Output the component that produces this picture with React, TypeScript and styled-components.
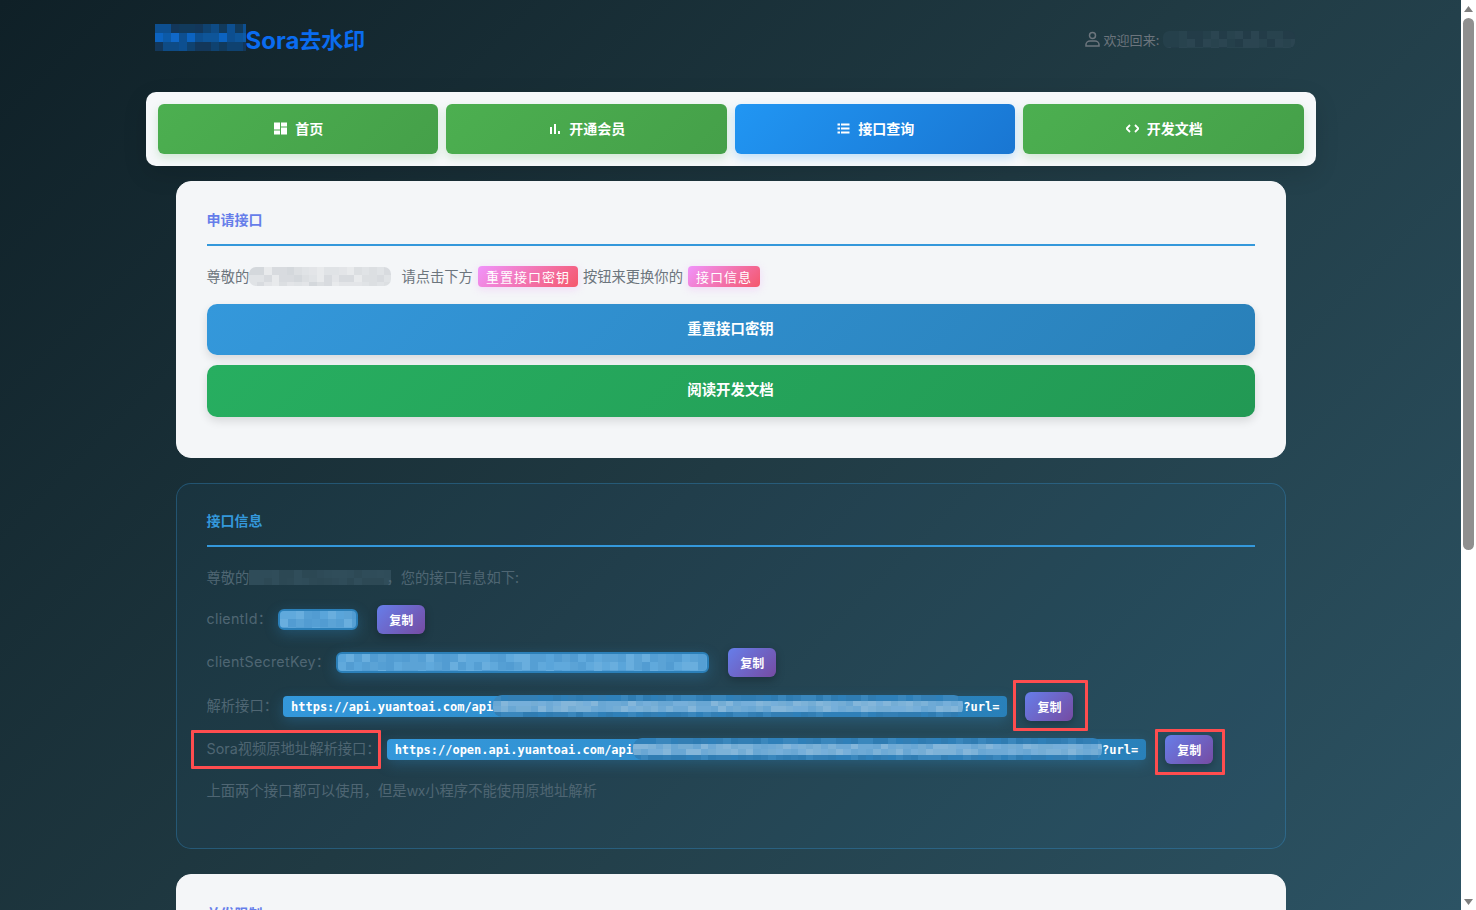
import React from 'react';
import styled, { createGlobalStyle } from 'styled-components';

const Global = createGlobalStyle`
  html, body { margin: 0; padding: 0; height: 100%; overflow: hidden; }
  body { font-family: "Inter", "Noto Sans CJK SC", sans-serif; font-size: 14.3px; }
`;

const Viewport = styled.div`display: flex; height: 910px; overflow: hidden;`;
const Page = styled.div`
  flex: 1; min-width: 0; overflow: hidden;
  background: linear-gradient(135deg, #0f2027 0%, #203a43 50%, #2c5364 100%);
`;
const Rail = styled.div`
  width: 15px; flex: none; background: #fff; display: flex; flex-direction: column; align-items: center;
`;
const RailArrow = styled.div<{ $down?: boolean }>`
  height: 17px; flex: none; display: flex; align-items: center; justify-content: center; width: 100%;
  margin-top: ${p => (p.$down ? 'auto' : '0')};
`;
const RailThumb = styled.div`width: 11px; height: 532px; margin-top: 1px; background: #8f8f8f; border-radius: 6px;`;

const Container = styled.div`width: 1170px; margin: 0 auto;`;
const Header = styled.header`
  height: 78px; padding-bottom: 2px; margin-bottom: 12px; padding-left: 9px; padding-right: 21px; display: flex; align-items: center; justify-content: space-between;
`;
const Logo = styled.div`
  display: flex; align-items: center; font-family: "Noto Sans CJK SC", sans-serif; font-size: 22px; font-weight: 700; color: #0a6cf0; line-height: 1;
`;
const LogoMask = styled.div`margin-bottom: 3px;`;
const LogoLatin = styled.span`font-family: "Inter", "Noto Sans CJK SC", sans-serif; font-size: 24px; font-weight: 700; margin-top: 4px;`;
const LogoCjk = styled.span`margin-bottom: 2px;`;
const User = styled.div`display: flex; align-items: center; gap: 3px; color: #6c757d; font-size: 13px; font-family: "Noto Sans CJK SC", sans-serif;`;
const Welcome = styled.span`letter-spacing: .1px;`;

const NavPanel = styled.nav`
  background: #f6f8fa; border-radius: 10px; padding: 12px; display: grid; grid-template-columns: repeat(4, 1fr); gap: 8px;
  box-shadow: 0 8px 24px rgba(0,0,0,.12);
`;
const NavButton = styled.div<{ $active?: boolean }>`
  height: 50px; box-sizing: border-box; padding: 0 0 2px 2px; border-radius: 6px; display: flex; align-items: center; justify-content: center; gap: 8px;
  color: #fff; font-size: 14px; font-weight: 700; font-family: "Noto Sans CJK SC", sans-serif;
  background: ${p => (p.$active ? 'linear-gradient(135deg, #2196f3, #1976d2)' : 'linear-gradient(135deg, #4caf50, #45a049)')};
  box-shadow: 0 4px 10px ${p => (p.$active ? 'rgba(33,150,243,.25)' : 'rgba(76,175,80,.22)')};
`;

const Card = styled.section<{ $dark?: boolean }>`
  width: 1110px; box-sizing: border-box; margin: ${p => (p.$dark ? '25px' : '15px')} auto 0; padding: 28px 30px;
  border-radius: 15px; border: 1px solid ${p => (p.$dark ? 'rgba(52,152,219,.32)' : '#f4f6f8')};
  background: ${p => (p.$dark ? 'rgba(52,152,219,.055)' : '#f4f6f8')};
`;
const CardNext = styled(Card)`margin-top: 25px; height: 300px;`;
const Title = styled.h2<{ $dark?: boolean }>`
  margin: 0; font-size: 14px; font-weight: 700; border-bottom: 2px solid #3498db;
  line-height: ${p => (p.$dark ? '17px' : '19px')}; padding-bottom: ${p => (p.$dark ? '16px' : '15px')};
  color: ${p => (p.$dark ? '#3498db' : '#667eea')}; font-family: "Noto Sans CJK SC", sans-serif;
`;
const NextTitle = styled(Title)`line-height: 21px; padding-bottom: 13px;`;
const TextRow = styled.div`
  margin-top: 20px; display: flex; align-items: center; height: 21px; color: #6c757d; font-size: 14.3px; line-height: 21px;
  font-family: "Noto Sans CJK SC", sans-serif; white-space: nowrap;
`;
const RowText = styled.span<{ $pull?: boolean }>`margin-bottom: 2px; margin-left: ${p => (p.$pull ? '-5px' : '0')};`;
const RowGap = styled.span`width: 10px; flex: none;`;
const Tag = styled.span`
  display: inline-flex; align-items: center; height: 21px; padding: 0 8px; border-radius: 4px; color: #fff; font-size: 13px; letter-spacing: 1px;
  background: linear-gradient(135deg, #f093fb, #f5576c); margin: 0 5px; box-shadow: 0 2px 8px rgba(240,147,251,.3);
`;
const BigButton = styled.div<{ $green?: boolean; $h: number; $top: number }>`
  height: ${p => p.$h}px; box-sizing: border-box; padding-bottom: 5px; margin-top: ${p => p.$top}px; border-radius: 10px; display: flex; align-items: center; justify-content: center;
  color: #fff; font-weight: 700; font-size: 14.4px; font-family: "Noto Sans CJK SC", sans-serif;
  background: ${p => (p.$green ? 'linear-gradient(135deg, #27ae60, #229954)' : 'linear-gradient(135deg, #3498db, #2980b9)')};
  box-shadow: 0 4px 10px rgba(0,0,0,.12);
`;
const ButtonStack = styled.div`margin-bottom: 12px;`;

const DimRow = styled(TextRow)`color: #4f6673;`;
const DimNote = styled(DimRow)`margin-top: 16px; margin-bottom: 19px;`;
const KeyRow = styled.div<{ $first?: boolean }>`
  display: flex; align-items: center; height: 29px; margin-top: ${p => (p.$first ? '17px' : '14.3px')};
  color: #4f6673; font-size: 14.3px; white-space: nowrap; font-family: "Inter", "Noto Sans CJK SC", sans-serif;
`;
const Label = styled.span<{ $latin?: boolean; $gap?: number }>`
  position: relative; margin: 0 ${p => p.$gap ?? 6}px 4px 0; letter-spacing: ${p => (p.$latin ? '.25px' : '0')};
`;
const Pill = styled.code`
  display: inline-flex; align-items: center; height: 21px; padding: 1px 8px 0; box-sizing: border-box; border-radius: 4px; color: #fff;
  font-family: "DejaVu Sans Mono", monospace; font-weight: 700; font-size: 12px; letter-spacing: 0;
  background: linear-gradient(135deg, #3498db, #2980b9); box-shadow: 0 4px 14px rgba(52,152,219,.28);
`;
const MaskPill = styled(Pill)`padding: 0; border: 2px solid #2b7fb8; border-radius: 6px; overflow: hidden;`;
const CopyWrap = styled.div<{ $gap: number }>`position: relative; margin-left: ${p => p.$gap}px; display: flex;`;
const CopyButton = styled.div`
  width: 48px; height: 29px; border-radius: 6px; display: flex; align-items: center; justify-content: center;
  color: #fff; font-size: 12px; font-weight: 700; font-family: "Noto Sans CJK SC", sans-serif;
  background: linear-gradient(135deg, #667eea, #764ba2); box-shadow: 0 3px 8px rgba(0,0,0,.25);
`;
const Annotation = styled.div<{ $t: number; $r: number; $b: number; $l: number }>`
  position: absolute; top: ${p => p.$t}px; right: ${p => p.$r}px; bottom: ${p => p.$b}px; left: ${p => p.$l}px;
  border: 3px solid #ff4d4f; border-radius: 1px; pointer-events: none;
`;
const MosaicSvg = styled.svg<{ $r: number; $over?: boolean }>`
  display: block; flex: none; border-radius: ${p => p.$r}px;
  ${p => (p.$over ? 'margin: -3px 0 -2px;' : '')}
`;

function hash(n: number) {
  const x = Math.sin(n * 12.9898 + 4.1) * 43758.5453;
  return x - Math.floor(x);
}
type MosaicProps = { w: number; h: number; cell: number; cellH?: number; colors: string[]; edge?: string[]; seed?: number; r?: number; over?: boolean };
const Mosaic = ({ w, h, cell, cellH, colors, edge, seed = 1, r = 0, over }: MosaicProps) => {
  const rects: React.ReactNode[] = [];
  const ch = cellH ?? cell;
  const cols = Math.ceil(w / cell);
  const rows = Math.ceil(h / ch);
  for (let y = 0; y < rows; y++)
    for (let x = 0; x < cols; x++) {
      const pal = edge && (y === 0 || y === rows - 1) ? edge : colors;
      const c = pal[Math.floor(hash(x * 31 + y * 97 + seed) * pal.length)];
      rects.push(<rect key={`${x}-${y}`} x={x * cell} y={y * ch} width={cell} height={ch} fill={c} />);
    }
  return (
    <MosaicSvg $r={r} $over={over} width={w} height={h} viewBox={`0 0 ${w} ${h}`} shapeRendering="crispEdges">
      {rects}
    </MosaicSvg>
  );
};

const GridIcon = () => (
  <svg width="13" height="13" viewBox="0 0 13 13" fill="#fff">
    <rect x="0" y="0.5" width="6" height="7" /><rect x="0" y="8.5" width="6" height="4" /><rect x="7" y="0.5" width="6" height="4" /><rect x="7" y="5.5" width="6" height="7" />
  </svg>
);
const BarsIcon = () => (
  <svg width="12" height="13" viewBox="0 0 12 13" fill="#fff">
    <rect x="1" y="5" width="2" height="7" /><rect x="5" y="2" width="2" height="10" /><rect x="9" y="9" width="2" height="3" />
  </svg>
);
const ListIcon = () => (
  <svg width="13" height="13" viewBox="0 0 13 13" fill="#fff">
    {[2, 6, 10].map(y => (
      <React.Fragment key={y}><rect x="0.5" y={y - 0.5} width="2.5" height="2" /><rect x="4" y={y - 0.5} width="8.5" height="2" /></React.Fragment>
    ))}
  </svg>
);
const CodeIcon = () => (
  <svg width="13" height="13" viewBox="1 0 13 13" fill="none" stroke="#fff" strokeWidth="1.8">
    <path d="M5 3L1.5 6.5 5 10M10 3l3.5 3.5L10 10" />
  </svg>
);
const UserIcon = () => (
  <svg width="15" height="16" viewBox="0 0 15 16" fill="none" stroke="#6c757d" strokeWidth="1.5">
    <circle cx="7.5" cy="4.5" r="3" />
    <path d="M1 15v-1.5C1 11.5 3 10 5 10h5c2 0 4 1.5 4 3.5V15z" />
  </svg>
);
const Tri = ({ down }: { down?: boolean }) => (
  <svg width="9" height="6" viewBox="0 0 9 6" fill="#7f7f7f"><path d={down ? 'M0 0h9L4.5 6z' : 'M4.5 0L9 6H0z'} /></svg>
);

const logoBlue = ['#0d4f90', '#0c5aa8', '#0c63c0', '#0e5599', '#1068c8'];
const logoEdge = ['#113a5c', '#0f4270', '#0e4b85', '#13375a', '#0d4f90'];
const lightGrey = ['#e3e5e8', '#dcdfe2', '#d8dbdf', '#e0e3e6', '#e8eaec', '#d4d8dc'];
const faint = ['#2d4955', '#2f4c59', '#2c4854', '#304d5a', '#2e4a57'];
const welcome = ['#233c48', '#25404b', '#28434e', '#2b4551'];
const blues = ['#559fd4', '#5aa5da', '#60a9dc', '#529cd2', '#69aede', '#5ba3d6'];
const urlMid = ['#6eaad6', '#76afda', '#7cb2d8', '#69a7d4', '#84b6da', '#74add5'];
const urlEdge = ['#2f80b9', '#337fb5', '#3a87bd', '#2f7cb2'];

export default function App() {
  return (
    <>
      <Global />
      <Viewport>
        <Page>
          <Container>
            <Header>
              <Logo>
                <LogoMask><Mosaic w={91} h={27} cell={8} cellH={9} colors={logoBlue} edge={logoEdge} seed={3} /></LogoMask>
                <LogoLatin>Sora</LogoLatin>
                <LogoCjk>去水印</LogoCjk>
              </Logo>
              <User>
                <UserIcon />
                <Welcome>欢迎回来:</Welcome>
                <Mosaic w={132} h={17} cell={8} colors={welcome} seed={5} r={6} />
              </User>
            </Header>
            <NavPanel>
              <NavButton><GridIcon />首页</NavButton>
              <NavButton><BarsIcon />开通会员</NavButton>
              <NavButton $active><ListIcon />接口查询</NavButton>
              <NavButton><CodeIcon />开发文档</NavButton>
            </NavPanel>
          </Container>

          <Card>
            <Title>申请接口</Title>
            <TextRow>
              <RowText>尊敬的</RowText>
              <Mosaic w={142} h={19} cell={7.5} colors={lightGrey} seed={7} r={7} />
              <RowGap />
              <RowText>请点击下方</RowText>
              <Tag>重置接口密钥</Tag>
              <RowText>按钮来更换你的</RowText>
              <Tag>接口信息</Tag>
            </TextRow>
            <ButtonStack>
              <BigButton $h={51} $top={17}>重置接口密钥</BigButton>
              <BigButton $h={52} $top={10} $green>阅读开发文档</BigButton>
            </ButtonStack>
          </Card>

          <Card $dark>
            <Title $dark>接口信息</Title>
            <DimRow>
              <RowText>尊敬的</RowText>
              <Mosaic w={142} h={15} cell={7.5} colors={faint} seed={11} />
              <RowText $pull>，您的接口信息如下:</RowText>
            </DimRow>
            <KeyRow $first>
              <Label $latin>clientId：</Label>
              <MaskPill><Mosaic w={76} h={17} cell={8} colors={blues} seed={13} /></MaskPill>
              <CopyWrap $gap={19}><CopyButton>复制</CopyButton></CopyWrap>
            </KeyRow>
            <KeyRow>
              <Label $latin>clientSecretKey：</Label>
              <MaskPill><Mosaic w={369} h={17} cell={8} colors={blues} seed={17} /></MaskPill>
              <CopyWrap $gap={19}><CopyButton>复制</CopyButton></CopyWrap>
            </KeyRow>
            <KeyRow>
              <Label $gap={5}>解析接口：</Label>
              <Pill>
                https://api.yuantoai.com/api
                <Mosaic w={470} h={22} cell={7.5} cellH={5.5} colors={urlMid} edge={urlEdge} seed={19} r={9} over />
                ?url=
              </Pill>
              <CopyWrap $gap={18}>
                <CopyButton>复制</CopyButton>
                <Annotation $t={-12} $r={-15} $b={-10} $l={-12} />
              </CopyWrap>
            </KeyRow>
            <KeyRow>
              <Label>
                Sora视频原地址解析接口：
                <Annotation $t={-7} $r={0} $b={-11} $l={-16} />
              </Label>
              <Pill>
                https://open.api.yuantoai.com/api
                <Mosaic w={469} h={22} cell={7.5} cellH={5.5} colors={urlMid} edge={urlEdge} seed={23} r={9} over />
                ?url=
              </Pill>
              <CopyWrap $gap={19}>
                <CopyButton>复制</CopyButton>
                <Annotation $t={-6} $r={-12} $b={-11} $l={-10} />
              </CopyWrap>
            </KeyRow>
            <DimNote><RowText>上面两个接口都可以使用，但是wx小程序不能使用原地址解析</RowText></DimNote>
          </Card>

          <CardNext>
            <NextTitle>并发限制</NextTitle>
          </CardNext>
        </Page>
        <Rail>
          <RailArrow><Tri /></RailArrow>
          <RailThumb />
          <RailArrow $down><Tri down /></RailArrow>
        </Rail>
      </Viewport>
    </>
  );
}
